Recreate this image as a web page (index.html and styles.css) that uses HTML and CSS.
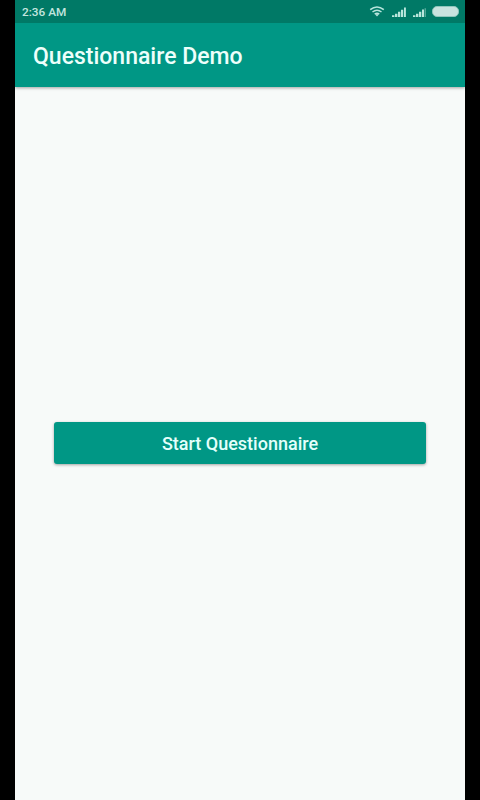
FILE: index.html
```html
<!DOCTYPE html>
<html lang="en">
<head>
<meta charset="utf-8">
<title>Questionnaire Demo</title>
<link rel="stylesheet" href="styles.css">
</head>
<body>
<div class="screen">
  <div class="status-bar">
    <span class="clock">2:36 AM</span>
    <div class="status-icons">
      <svg class="wifi" width="16" height="12" viewBox="0 0 16 12">
        <path d="M1.2 4.6Q8-.8 14.8 4.6M3.5 7Q8 3.4 12.5 7M5.7 9.2Q8 7.4 10.3 9.2"/>
        <path class="solid" d="M6.2 9.4Q8 8.4 9.8 9.4L8 11.4z"/>
      </svg>
      <svg class="signal" width="14" height="10" viewBox="0 0 14 10">
        <path d="M0 8.3h2.4V10H0zM3 6.8h2.4V10H3zM6 4.8h2.3V10H6zM9 2.8h2.2V10H9zM12 .5h1.9V10H12z"/>
      </svg>
      <svg class="signal second" width="14" height="10" viewBox="0 0 14 10">
        <path d="M0 8.3h2.4V10H0zM3 6.8h2.4V10H3zM6 4.8h2.3V10H6zM9 2.5h2V10H9z"/>
        <path class="dim" d="M11.6 1.3h1.2V10h-1.2z"/>
      </svg>
      <span class="battery"></span>
    </div>
  </div>
  <header class="app-bar"><h1>Questionnaire Demo</h1></header>
  <main class="content">
    <button class="start" type="button">Start Questionnaire</button>
  </main>
</div>
</body>
</html>
```

FILE: styles.css
```css
* { box-sizing: border-box; }

body {
  margin: 0;
  background: #000;
  font-family: Roboto, sans-serif;
}

.screen {
  display: flex;
  flex-direction: column;
  width: 450px;
  height: 800px;
  margin: 0 auto;
  background: #f7faf9;
}

.status-bar {
  display: flex;
  flex: none;
  align-items: center;
  justify-content: space-between;
  height: 23px;
  padding: 0 6px 0 7px;
  background: #007966;
  color: #c3e5df;
}

.clock {
  font-size: 11.8px;
  font-weight: 500;
  line-height: 22px;
}

.status-icons { display: flex; align-items: center; }

.wifi { fill: none; stroke: #b8e5dc; stroke-width: 1.5; margin: 0 7px 1px 0; }
.wifi .solid { fill: #b8e5dc; stroke: none; }

.signal { fill: #b9e6dc; margin: 1px 7px 0 0; }
.signal.second { margin-right: 5px; }
.signal .dim { fill: #66b3a4; }

.battery {
  width: 27px;
  height: 11px;
  border: 1px solid #8fc6bc;
  border-radius: 5px;
  background: #c8e3df;
}

.app-bar {
  display: flex;
  flex: none;
  align-items: center;
  height: 64px;
  padding: 4px 18px 0;
  background: #009785;
  box-shadow: 0 1px 3px rgba(0, 0, 0, .35);
  clip-path: inset(0 0 -6px);
}

.app-bar h1 {
  margin: 0;
  color: #edfffb;
  font-size: 23px;
  font-weight: 500;
  line-height: 28px;
}

.content {
  display: flex;
  flex: 1;
  align-items: center;
  padding: 0 39px 1px;
}

.start {
  width: 100%;
  height: 42px;
  padding: 2px 0 0;
  border: 0;
  border-radius: 3px;
  background: #009785;
  box-shadow: 0 1px 3px rgba(0, 0, 0, .35);
  color: #e4fffb;
  font: 500 18px/24px Roboto, sans-serif;
}
```
